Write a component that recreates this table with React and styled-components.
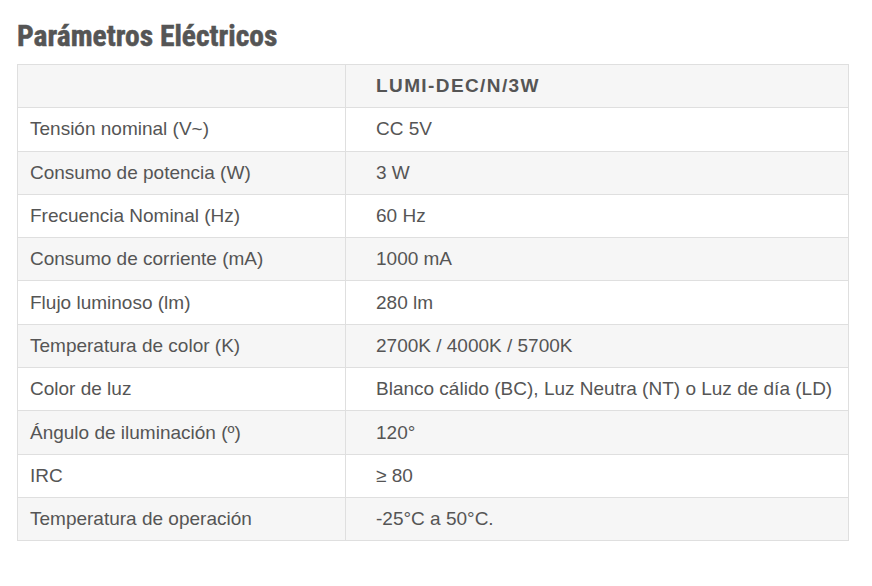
import styled, { createGlobalStyle } from 'styled-components';

const GlobalStyle = createGlobalStyle`
    body {
        margin: 0;
        background: #ffffff;
        font-family: "Liberation Sans", Arial, sans-serif;
        color: #555555;
    }
`

const specs = [
    ['Tensión nominal (V~)', 'CC 5V'],
    ['Consumo de potencia (W)', '3 W'],
    ['Frecuencia Nominal (Hz)', '60 Hz'],
    ['Consumo de corriente (mA)', '1000 mA'],
    ['Flujo luminoso (lm)', '280 lm'],
    ['Temperatura de color (K)', '2700K / 4000K / 5700K'],
    ['Color de luz', 'Blanco cálido (BC), Luz Neutra (NT) o Luz de día (LD)'],
    ['Ángulo de iluminación (º)', '120°'],
    ['IRC', '≥ 80'],
    ['Temperatura de operación', '-25°C a 50°C.'],
]

const App = () => {
    return (
        <Page>
            <GlobalStyle />
            <Title>Parámetros Eléctricos</Title>
            <SpecTable>
                <colgroup>
                    <col style={{ width: '328px' }} />
                    <col />
                </colgroup>
                <thead>
                    <Row shaded>
                        <Cell />
                        <Cell head value>LUMI-DEC/N/3W</Cell>
                    </Row>
                </thead>
                <tbody>
                    {specs.map(([label, value], i) => (
                        <Row key={label} shaded={i % 2 === 1}>
                            <Cell>{label}</Cell>
                            <Cell value>{value}</Cell>
                        </Row>
                    ))}
                </tbody>
            </SpecTable>
        </Page>
    )
}

export default App

const Page = styled.div`
    padding: 21px 24px 40px 17px;
    width: 872px;
    box-sizing: border-box;
`
const Title = styled.h2`
    margin: 0 0 12px 0;
    font-family: "Roboto Condensed", "Liberation Sans Narrow", "Liberation Sans", sans-serif;
    font-weight: 700;
    font-size: 29.5px;
    line-height: 31px;
    color: #555555;
    -webkit-text-stroke: 0.5px #555555;
`
const SpecTable = styled.table`
    width: 832px;
    border-collapse: collapse;
    table-layout: fixed;
    border: 1px solid #dfdfdf;
`
const Row = styled.tr`
    height: 43.3px;
    background: ${p => (p.shaded ? '#f6f6f6' : '#ffffff')};
`
const Cell = styled.td`
    border: 1px solid #dfdfdf;
    padding: 0 0 0 ${p => (p.value ? '30px' : '12px')};
    font-size: 19px;
    font-weight: ${p => (p.head ? 700 : 400)};
    letter-spacing: ${p => (p.head ? '1.4px' : '0')};
    color: #555555;
    white-space: nowrap;
    vertical-align: middle;
`
